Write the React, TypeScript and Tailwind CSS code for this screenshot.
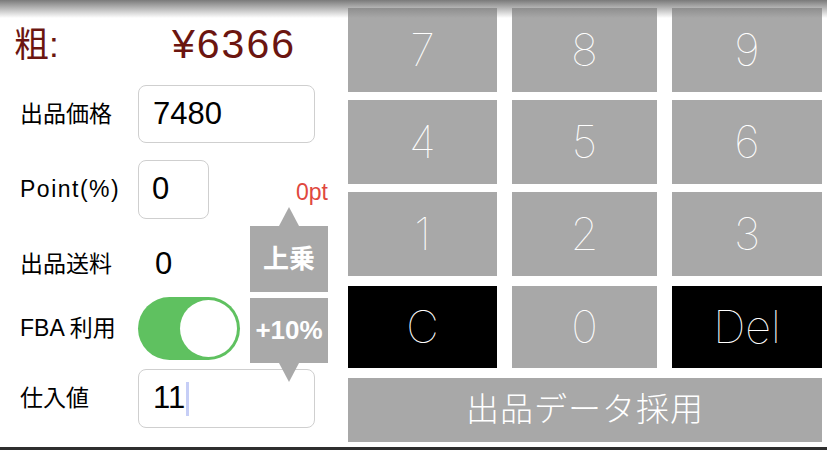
import React from 'react';

const jp = 'font-["Liberation_Sans","Noto_Sans_CJK_JP",sans-serif]';

const keys = [
  { label: '7', dark: false },
  { label: '8', dark: false },
  { label: '9', dark: false },
  { label: '4', dark: false },
  { label: '5', dark: false },
  { label: '6', dark: false },
  { label: '1', dark: false },
  { label: '2', dark: false },
  { label: '3', dark: false },
  { label: 'C', dark: true },
  { label: '0', dark: false },
  { label: 'Del', dark: true },
];

function Label({ children, wide }: { children: React.ReactNode; wide?: boolean }) {
  return (
    <div
      className={`w-[138px] shrink-0 pl-[20px] text-[23px] text-black whitespace-nowrap ${
        wide ? 'tracking-[1.5px]' : ''
      }`}
    >
      {children}
    </div>
  );
}

export default function App() {
  return (
    <div className={`relative w-[827px] h-[450px] bg-white overflow-hidden flex flex-col ${jp}`}>
      <div className="flex h-[447px]">
        {/* left form */}
        <div className="relative w-[340px] shrink-0">
          <div className="mt-[22px] h-[46px] flex items-center text-[#6b1510]">
            <span className="pl-[14px] w-[172px] text-[35px]">粗:</span>
            <span className="text-[41px] tracking-[2px]">¥6366</span>
          </div>

          <div className="mt-[17px] h-[58px] flex items-center">
            <Label>出品価格</Label>
            <div className="w-[177px] h-[58px] border border-[#cfcfcf] rounded-lg flex items-center pl-[14px] text-[31px]">
              7480
            </div>
          </div>

          <div className="mt-[17px] h-[59px] flex items-center">
            <Label wide>Point(%)</Label>
            <div className="w-[71px] h-[59px] border border-[#cfcfcf] rounded-lg flex items-center pl-[13px] text-[31px]">
              0
            </div>
            <span className="ml-auto pr-[12px] pt-[6px] text-[23px] text-[#e0483e]">0pt</span>
          </div>

          <div className="mt-[26px] h-[38px] flex items-center">
            <Label>出品送料</Label>
            <span className="pl-[17px] text-[31px]">0</span>
          </div>

          <div className="mt-[14px] h-[63px] flex items-center">
            <Label>FBA 利用</Label>
            <div className="w-[102px] h-[63px] rounded-full bg-[#5fc160] flex items-center justify-end pr-[3px]">
              <div className="w-[57px] h-[57px] rounded-full bg-white" />
            </div>
          </div>

          <div className="mt-[9px] h-[59px] flex items-center">
            <Label>仕入値</Label>
            <div className="w-[177px] h-[59px] border border-[#cfcfcf] rounded-lg flex items-center pl-[14px] text-[31px]">
              11
              <span className="ml-[1px] w-[3px] h-[34px] bg-[#c6cef6]" />
            </div>
          </div>

          {/* popover buttons */}
          <div className="absolute left-[250px] top-[207px] w-[78px] flex flex-col items-center">
            <div className="w-0 h-0 border-x-[10px] border-x-transparent border-b-[19px] border-b-[#a9a9a9]" />
            <div className="w-[78px] h-[66px] bg-[#a9a9a9] flex items-center justify-center text-white font-bold text-[26px]">
              上乗
            </div>
          </div>
          <div className="absolute left-[250px] top-[298px] w-[78px] flex flex-col items-center">
            <div className="w-[78px] h-[65px] bg-[#a9a9a9] flex items-center justify-center text-white font-bold text-[26px]">
              +10%
            </div>
            <div className="w-0 h-0 border-x-[10px] border-x-transparent border-t-[19px] border-t-[#a9a9a9]" />
          </div>
        </div>

        {/* keypad */}
        <div className="pl-[8px] pt-[8px]">
          <div className="grid grid-cols-[149px_145px_150px] grid-rows-[84px_84px_84px_84px] gap-x-[15px] gap-y-[8px]">
            {keys.map((k, i) => (
              <div
                key={k.label}
                className={`flex items-center justify-center text-white text-[45px] font-thin font-["Inter",sans-serif] ${
                  k.dark ? 'bg-black' : 'bg-[#a8a8a8]'
                } ${i >= 9 ? 'mt-[2px]' : ''}`}
              >
                {k.label}
              </div>
            ))}
          </div>
          <div className="mt-[10px] w-[474px] h-[64px] bg-[#a8a8a8] flex items-center justify-center text-white text-[33px] font-light tracking-[1px]">
            出品データ採用
          </div>
        </div>
      </div>
      <div className="h-[3px] bg-[#2f2f2f]" />

      {/* top shadow */}
      <div className="absolute inset-x-0 top-0 h-[18px] bg-gradient-to-b from-[#7a7a7a] to-transparent pointer-events-none" />
    </div>
  );
}
